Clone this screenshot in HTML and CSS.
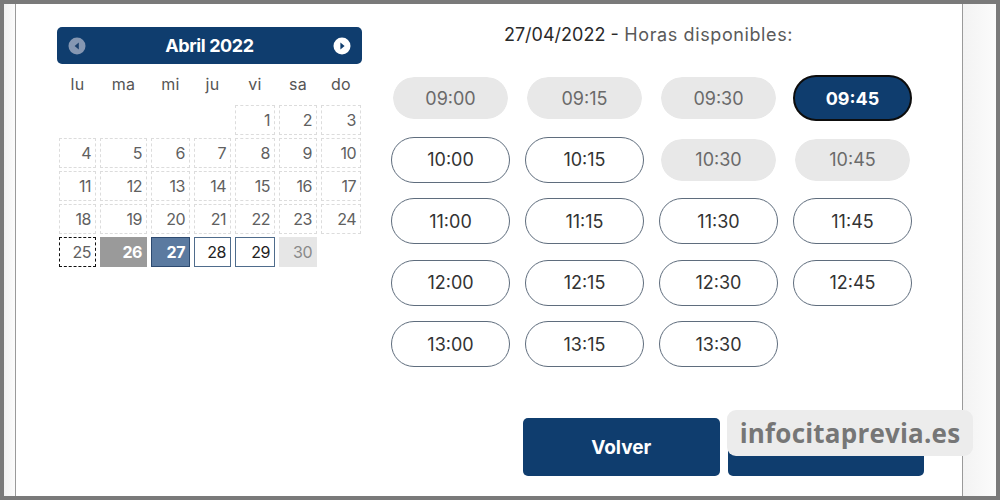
FILE: index.html
```html
<!DOCTYPE html>
<html lang="es">
<head>
<meta charset="utf-8">
<title>Cita previa</title>
<link rel="stylesheet" href="styles.css">
</head>
<body>
<div class="frame">
  <div class="strip-left"></div>
  <div class="content">
    <div class="calendar">
      <div class="cal-head">
        <svg class="nav" width="18" height="18" viewBox="0 0 18 18"><circle cx="9" cy="9" r="8.5" fill="#8597b2"/><path d="M10.8 5.6 L6.6 9 L10.8 12.4 Z" fill="#1a3f6b"/></svg>
        <span class="cal-title">Abril 2022</span>
        <svg class="nav" width="18" height="18" viewBox="0 0 18 18"><circle cx="9" cy="9" r="8.5" fill="#ffffff"/><path d="M7.4 5.6 L11.6 9 L7.4 12.4 Z" fill="#0f3d6e"/></svg>
      </div>
      <div class="cal-grid">
        <div class="dn">lu</div><div class="dn">ma</div><div class="dn">mi</div><div class="dn">ju</div><div class="dn">vi</div><div class="dn">sa</div><div class="dn">do</div>
        <div class="empty"></div><div class="empty"></div><div class="empty"></div><div class="empty"></div>
        <div class="d">1</div><div class="d">2</div><div class="d">3</div>
        <div class="d">4</div><div class="d">5</div><div class="d">6</div><div class="d">7</div><div class="d">8</div><div class="d">9</div><div class="d">10</div>
        <div class="d">11</div><div class="d">12</div><div class="d">13</div><div class="d">14</div><div class="d">15</div><div class="d">16</div><div class="d">17</div>
        <div class="d">18</div><div class="d">19</div><div class="d">20</div><div class="d">21</div><div class="d">22</div><div class="d">23</div><div class="d">24</div>
        <div class="d today">25</div><div class="d past">26</div><div class="d sel">27</div><div class="d avail">28</div><div class="d avail">29</div><div class="d off">30</div>
      </div>
    </div>
    <div class="hours">
      <div class="hours-title"><span class="date">27/04/2022 -</span> Horas disponibles:</div>
      <div class="slots">
        <div class="slot busy">09:00</div><div class="slot busy">09:15</div><div class="slot busy">09:30</div><div class="slot active">09:45</div>
        <div class="slot">10:00</div><div class="slot">10:15</div><div class="slot busy">10:30</div><div class="slot busy">10:45</div>
        <div class="slot">11:00</div><div class="slot">11:15</div><div class="slot">11:30</div><div class="slot">11:45</div>
        <div class="slot">12:00</div><div class="slot">12:15</div><div class="slot">12:30</div><div class="slot">12:45</div>
        <div class="slot">13:00</div><div class="slot">13:15</div><div class="slot">13:30</div>
      </div>
      <div class="actions">
        <div class="btn">Volver</div>
        <div class="btn"></div>
      </div>
    </div>
  </div>
  <div class="strip-right"></div>
  <div class="watermark">infocitaprevia.es</div>
</div>
</body>
</html>
```
FILE: styles.css
```css
* { box-sizing: border-box; }
html, body { margin: 0; padding: 0; background: #ffffff; }
body { font-family: "Inter", "Liberation Sans", sans-serif; }

.frame {
  position: relative;
  width: 1000px;
  height: 500px;
  border: 4px solid #7a7a7a;
  display: flex;
  overflow: hidden;
}
.strip-left {
  width: 12px;
  background: linear-gradient(90deg, #f2f2f2, #fbfbfb);
  border-right: 1px solid #9a9a9a;
}
.content {
  width: 947px;
  display: flex;
  padding: 23px 0 0 41px;
  border-right: 1px solid #9a9a9a;
}
.strip-right {
  flex: 1;
  background: linear-gradient(90deg, #f3f3f3, #fbfbfb);
}

/* calendar */
.calendar { width: 305px; }
.cal-head {
  height: 37px;
  background: #0f3d6e;
  border-radius: 5px;
  display: flex;
  align-items: center;
  justify-content: space-between;
  padding: 0 11px 0 11px;
}
.nav { display: block; }
.cal-title {
  color: #ffffff;
  font-weight: 700;
  font-size: 18px;
  letter-spacing: -0.4px;
}
.cal-grid {
  display: grid;
  grid-template-columns: 37px 47px 39px 37px 40px 38px 40px;
  grid-auto-rows: 30px;
  grid-template-rows: 36px;
  column-gap: 4px;
  row-gap: 3px;
  margin: 2px 0 0 2px;
  color: #555555;
  font-size: 16px;
}
.dn {
  text-align: center;
  line-height: 36px;
  color: #555;
  margin-bottom: 4px;
  letter-spacing: 0.3px;
}
.d {
  border: 1px dashed #dcdcdc;
  text-align: right;
  padding-right: 4px;
  line-height: 28px;
  color: #606060;
  letter-spacing: -0.5px;
}
.d.today { border: 1px dashed #111111; }
.d.past { border: none; background: #9a9a9a; color: #ffffff; font-weight: 700; line-height: 30px; padding-right: 5px; }
.d.sel { border: 1px solid #2d4a70; background: #5b7aa0; color: #ffffff; font-weight: 700; }
.d.avail { border: 1px solid #4f6c8c; background: #ffffff; color: #222222; }
.d.off { border: none; background: #e6e6e6; color: #8a8a8a; line-height: 30px; padding-right: 5px; }

/* hours */
.hours {
  margin-left: 29px;
  width: 533px;
  padding-top: 0;
}
.hours-title {
  width: 521px;
  margin-left: -3px;
  text-align: center;
  font-size: 18px;
  color: #5a5a5a;
  line-height: 16px;
  letter-spacing: 0.6px;
}
.hours-title .date { color: #2a2a2a; letter-spacing: 0; }
.slots {
  margin-top: 32px;
  display: grid;
  grid-template-columns: repeat(4, 119px);
  grid-auto-rows: 46px;
  column-gap: 15px;
  row-gap: 15.5px;
}
.slot {
  border: 1px solid #5f6d7d;
  border-radius: 23px;
  display: flex;
  align-items: center;
  justify-content: center;
  font-size: 18px;
  color: #333333;
  letter-spacing: 0;
}
.slot.busy {
  border: 2px solid #ffffff;
  background: #e8e8e8;
  background-clip: padding-box;
  color: #6a6a6a;
}
.slot.active {
  border: 2px solid #0d0d0d;
  background: #0f3d6e;
  color: #ffffff;
  font-weight: 700;
}
.actions {
  display: flex;
  gap: 8px;
  margin: 51px 0 0 132px;
}
.btn {
  width: 197px;
  height: 58px;
  background: #0f3d6e;
  border-radius: 5px;
  color: #ffffff;
  font-weight: 700;
  font-size: 19px;
  display: flex;
  align-items: center;
  justify-content: center;
}

.watermark {
  position: absolute;
  left: 723px;
  top: 406px;
  width: 246px;
  height: 46px;
  background: #ececec;
  border-radius: 9px;
  font-family: "Open Sans", "Noto Sans", sans-serif;
  font-weight: 700;
  font-size: 26px;
  color: #767676;
  display: flex;
  align-items: center;
  justify-content: center;
  letter-spacing: 0.2px;
}
```
